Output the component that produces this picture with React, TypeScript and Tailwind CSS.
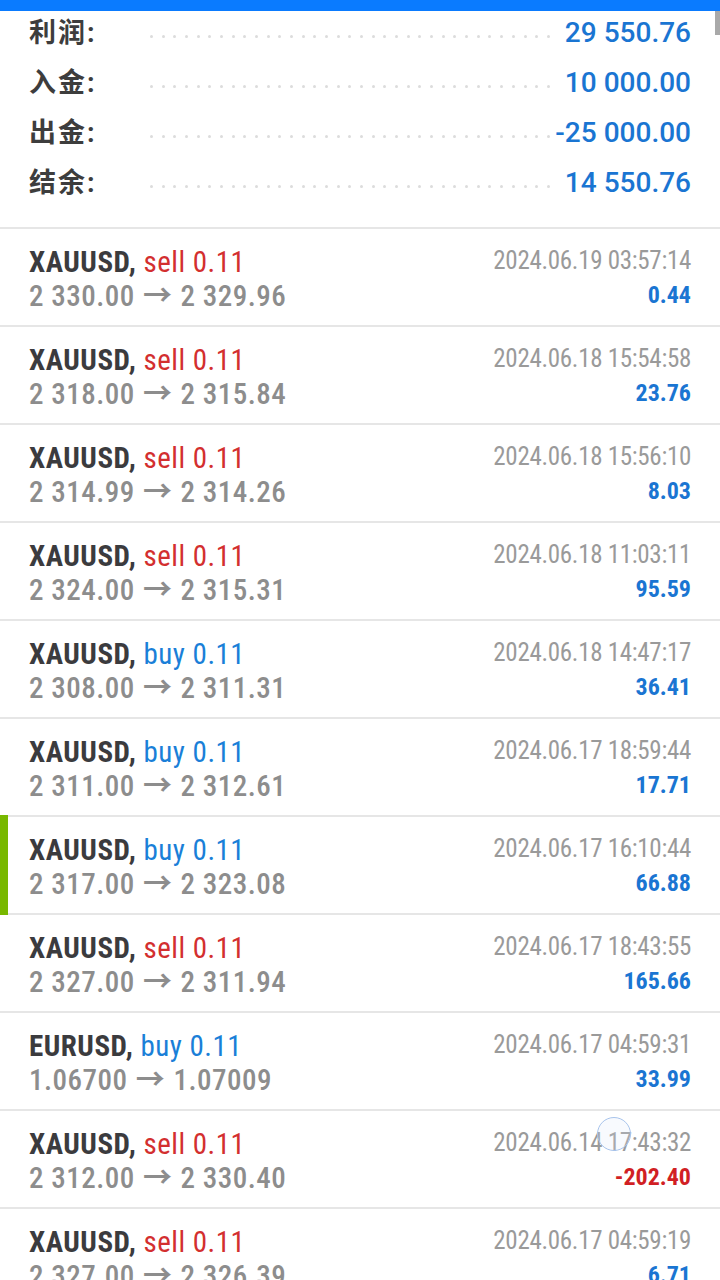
import React from 'react';

const summary = [
  { label: '利润', value: '29 550.76' },
  { label: '入金', value: '10 000.00' },
  { label: '出金', value: '-25 000.00' },
  { label: '结余', value: '14 550.76' },
];

type Trade = {
  symbol: string;
  side: 'buy' | 'sell';
  from: string;
  to: string;
  time: string;
  profit: string;
  mark?: boolean;
};

const trades: Trade[] = [
  { symbol: 'XAUUSD', side: 'sell', from: '2 330.00', to: '2 329.96', time: '2024.06.19 03:57:14', profit: '0.44' },
  { symbol: 'XAUUSD', side: 'sell', from: '2 318.00', to: '2 315.84', time: '2024.06.18 15:54:58', profit: '23.76' },
  { symbol: 'XAUUSD', side: 'sell', from: '2 314.99', to: '2 314.26', time: '2024.06.18 15:56:10', profit: '8.03' },
  { symbol: 'XAUUSD', side: 'sell', from: '2 324.00', to: '2 315.31', time: '2024.06.18 11:03:11', profit: '95.59' },
  { symbol: 'XAUUSD', side: 'buy', from: '2 308.00', to: '2 311.31', time: '2024.06.18 14:47:17', profit: '36.41' },
  { symbol: 'XAUUSD', side: 'buy', from: '2 311.00', to: '2 312.61', time: '2024.06.17 18:59:44', profit: '17.71' },
  { symbol: 'XAUUSD', side: 'buy', from: '2 317.00', to: '2 323.08', time: '2024.06.17 16:10:44', profit: '66.88', mark: true },
  { symbol: 'XAUUSD', side: 'sell', from: '2 327.00', to: '2 311.94', time: '2024.06.17 18:43:55', profit: '165.66' },
  { symbol: 'EURUSD', side: 'buy', from: '1.06700', to: '1.07009', time: '2024.06.17 04:59:31', profit: '33.99' },
  { symbol: 'XAUUSD', side: 'sell', from: '2 312.00', to: '2 330.40', time: '2024.06.14 17:43:32', profit: '-202.40' },
  { symbol: 'XAUUSD', side: 'sell', from: '2 327.00', to: '2 326.39', time: '2024.06.17 04:59:19', profit: '6.71' },
];

const dots = Array.from({ length: 35 });

const SummaryRow = ({ label, value }: { label: string; value: string }) => (
  <div className="flex h-[50px] items-center px-[29px]">
    <span className="w-[121px] shrink-0 text-[27px] font-bold tracking-[2px] text-[#3d3d3d]">
      {label}:
    </span>
    <div className="mt-[6px] flex w-[400px] shrink-0 justify-between">
      {dots.map((_, i) => (
        <span key={i} className="h-[3px] w-[3px] rounded-full bg-[#dcdcdc]" />
      ))}
    </div>
    <span className="ml-auto whitespace-nowrap text-[28px] font-medium text-[#1a75d2]">{value}</span>
  </div>
);

// trade list uses the condensed cut of Roboto
const TradeRow = ({ t }: { t: Trade }) => (
  <div className="relative flex h-[98px] justify-between border-b-2 border-[#e6e6e6] px-[29px] pt-[16px] [font-stretch:75%]">
    {t.mark && <div className="absolute bottom-[-2px] left-0 top-[-2px] w-[8px] bg-[#78b800]" />}
    <div className="flex flex-col whitespace-nowrap tracking-[0.5px]">
      <div className="text-[29px] leading-[34px]">
        <span className="font-bold text-[#3b3b3e]">{t.symbol},</span>{' '}
        <span className={t.side === 'sell' ? 'text-[#d32f2f]' : 'text-[#1a7fd8]'}>
          {t.side} 0.11
        </span>
      </div>
      <div className="text-[29px] font-medium leading-[34px] text-[#8d8d8d]">
        {t.from} <span className="mx-[1px] font-bold">→</span> {t.to}
      </div>
    </div>
    <div className="flex flex-col items-end whitespace-nowrap">
      <div className="mt-[1px] text-[25px] leading-[30px] tracking-[-0.3px] text-[#9a9a9a]">{t.time}</div>
      <div
        className={`mt-[4px] text-[24px] font-bold leading-[30px] ${
          t.profit.startsWith('-') ? 'text-[#d11f24]' : 'text-[#1a75d2]'
        }`}
      >
        {t.profit}
      </div>
    </div>
  </div>
);

export default function App() {
  return (
    <div className="relative h-[1280px] w-[720px] overflow-hidden bg-white [font-family:Roboto,'Noto_Sans_CJK_SC',sans-serif]">
      <div className="h-[11px] bg-[#0a7bff]" />
      <div className="absolute right-0 top-[11px] h-[24px] w-[5px] bg-[#a9a9a9]" />
      <div className="-mt-[3px] pb-[19px]">
        {summary.map((s) => (
          <SummaryRow key={s.label} {...s} />
        ))}
      </div>
      <div className="border-t-2 border-[#e6e6e6]">
        {trades.map((t, i) => (
          <TradeRow key={i} t={t} />
        ))}
      </div>
      <div className="absolute left-[597px] top-[1117px] h-[34px] w-[34px] rounded-full border-[1.5px] border-[#a8c4ec] bg-[#dbe7f8]/20" />
    </div>
  );
}
